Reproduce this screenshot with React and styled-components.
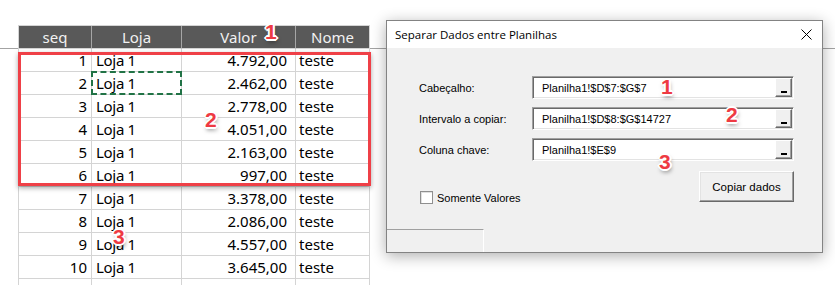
import React from "react";
import styled, { createGlobalStyle } from "styled-components";

const GlobalStyle = createGlobalStyle`
  html, body { margin: 0; padding: 0; background: #fff; }
  * { box-sizing: border-box; }
`;

const Page = styled.div`
  position: relative;
  width: 835px;
  height: 285px;
  overflow: hidden;
  display: flex;
  align-items: flex-start;
  background: linear-gradient(#a3a3a3, #a3a3a3) 0 48px / 100% 1px no-repeat, #fff;
`;

const SheetWrap = styled.div`
  position: relative;
  margin: 25px 0 0 18px;
`;

const Sheet = styled.div`
  display: grid;
  grid-template-columns: 73px 90px 114px 74px;
  border-top: 1px solid #d4d4d4;
  border-left: 1px solid #d4d4d4;
  background: #fff;
  font-family: "Noto Sans", "Liberation Sans", sans-serif;
  font-size: 15px;
  color: #000;
`;

const HeadCell = styled.div`
  height: 23px;
  background: #595959;
  color: #f2f2f2;
  border-right: 1px solid ${(p) => (p.$last ? "#d4d4d4" : "#a6a6a6")};
  border-bottom: 1px solid #d4d4d4;
  display: flex;
  align-items: center;
  justify-content: center;
  line-height: 1;
`;

const Cell = styled.div`
  position: relative;
  height: 23px;
  border-right: 1px solid #d4d4d4;
  border-bottom: 1px solid #d4d4d4;
  display: flex;
  align-items: center;
  justify-content: ${(p) => (p.$right ? "flex-end" : "flex-start")};
  padding: 0 ${(p) => p.$pr || 0}px 0 ${(p) => p.$pl || 0}px;
  white-space: nowrap;
  line-height: 1;
  letter-spacing: ${(p) => (p.$tight ? "-0.3px" : "0")};
  &::after {
    content: "";
    display: ${(p) => (p.$marked ? "block" : "none")};
    position: absolute;
    left: -1px;
    top: -1px;
    right: -1px;
    bottom: -1px;
    border: 2px dashed #217346;
  }
`;

const Highlight = styled.div`
  position: absolute;
  left: 0;
  top: 27px;
  width: 353px;
  height: 134px;
  border: 3px solid #ef4047;
  box-shadow: 0 2px 5px rgba(0, 0, 0, 0.35);
  pointer-events: none;
`;

const Dialog = styled.div`
  margin: 20px 0 0 16px;
  width: 437px;
  height: 233px;
  border: 1px solid #838383;
  box-shadow: 0 3px 14px rgba(0, 0, 0, 0.32);
  display: flex;
  flex-direction: column;
  font-family: "Liberation Sans", Arial, sans-serif;
  font-size: 11px;
  color: #000;
`;

const TitleBar = styled.div`
  height: 27px;
  background: #fff;
  display: flex;
  align-items: center;
  justify-content: space-between;
  padding: 0 10px 0 8px;
  font-family: "Open Sans", "Noto Sans", sans-serif;
  font-size: 11.5px;
  flex-shrink: 0;
`;

const Body = styled.div`
  flex: 1;
  background: #f0f0f0;
  display: flex;
  flex-direction: column;
`;

const Form = styled.div`
  display: grid;
  grid-template-columns: 113px 262px;
  row-gap: 8px;
  padding: 28px 0 0 32px;
`;

const Label = styled.div`
  display: flex;
  align-items: center;
`;

const RefBox = styled.div`
  height: 23px;
  background: #fff;
  border: 1px solid;
  border-color: #a0a0a0 #fff #fff #a0a0a0;
  box-shadow: inset 1px 1px #696969, inset -1px -1px #e3e3e3;
  display: flex;
  align-items: center;
  padding: 1px 1px 1px 9px;
`;

const RefText = styled.span`
  flex: 1;
`;

const PickButton = styled.div`
  width: 17px;
  align-self: stretch;
  background: #f0f0f0;
  border: 1px solid;
  border-color: #fff #696969 #696969 #fff;
  box-shadow: inset -1px -1px #a0a0a0;
  display: flex;
  align-items: flex-end;
  justify-content: center;
  padding-bottom: 3px;
`;

const Bar = styled.span`
  width: 6px;
  height: 2px;
  background: #000;
`;

const Actions = styled.div`
  display: flex;
  justify-content: space-between;
  padding: 10px 28px 0 33px;
`;

const CheckRow = styled.label`
  display: flex;
  align-items: center;
  gap: 4px;
  margin-top: 20px;
  height: 13px;
`;

const Box = styled.span`
  width: 13px;
  height: 13px;
  background: #fff;
  border: 1px solid #8f8f8f;
  box-shadow: inset 1px 1px #e0e0e0;
`;

const Button = styled.div`
  width: 95px;
  height: 31px;
  background: #f0f0f0;
  border: 1px solid;
  border-color: #fff #696969 #696969 #fff;
  box-shadow: inset -1px -1px #a0a0a0, inset 1px 1px #e3e3e3;
  display: flex;
  align-items: center;
  justify-content: center;
  font-size: 11.5px;
`;

const Status = styled.div`
  margin-top: auto;
  width: 97px;
  height: 23px;
  border-top: 1px solid #a0a0a0;
  border-right: 1px solid #fff;
`;

const Mark = styled.span`
  position: absolute;
  left: ${(p) => p.$x}px;
  top: ${(p) => p.$y}px;
  font-family: "Liberation Sans", Arial, sans-serif;
  font-weight: bold;
  font-size: 21px;
  line-height: 20px;
  color: #ee3a42;
  text-shadow: 1px 0 #fff, -1px 0 #fff, 0 1px #fff, 0 -1px #fff, 1px 1px #fff,
    -1px -1px #fff, 1px -1px #fff, -1px 1px #fff, 2px 0 #fff, -2px 0 #fff,
    0 2px #fff, 0 -2px #fff, 1px 3px 4px rgba(0, 0, 0, 0.5);
  pointer-events: none;
`;

const rows = [
  ["1", "4.792,00"],
  ["2", "2.462,00"],
  ["3", "2.778,00"],
  ["4", "4.051,00"],
  ["5", "2.163,00"],
  ["6", "997,00"],
  ["7", "3.378,00"],
  ["8", "2.086,00"],
  ["9", "4.557,00"],
  ["10", "3.645,00"],
];

const fields = [
  ["Cabeçalho:", "Planilha1!$D$7:$G$7"],
  ["Intervalo a copiar:", "Planilha1!$D$8:$G$14727"],
  ["Coluna chave:", "Planilha1!$E$9"],
];

export default function App() {
  return (
    <Page>
      <GlobalStyle />
      <SheetWrap>
        <Sheet>
          <HeadCell>seq</HeadCell>
          <HeadCell>Loja</HeadCell>
          <HeadCell>Valor</HeadCell>
          <HeadCell $last>Nome</HeadCell>
          {rows.map(([n, v], i) => (
            <React.Fragment key={n}>
              <Cell $right $pr={4}>{n}</Cell>
              <Cell $pl={4} $tight $marked={i === 1}>Loja 1</Cell>
              <Cell $right $pr={8}>{v}</Cell>
              <Cell $pl={3}>teste</Cell>
            </React.Fragment>
          ))}
          <Cell />
          <Cell />
          <Cell />
          <Cell />
        </Sheet>
        <Highlight />
      </SheetWrap>

      <Dialog>
        <TitleBar>
          <span>Separar Dados entre Planilhas</span>
          <svg width="11" height="11" viewBox="0 0 11 11">
            <path d="M0.5 0.5 L10.5 10.5 M10.5 0.5 L0.5 10.5" stroke="#000" strokeWidth="1" />
          </svg>
        </TitleBar>
        <Body>
          <Form>
            {fields.map(([l, v]) => (
              <React.Fragment key={l}>
                <Label>{l}</Label>
                <RefBox>
                  <RefText>{v}</RefText>
                  <PickButton>
                    <Bar />
                  </PickButton>
                </RefBox>
              </React.Fragment>
            ))}
          </Form>
          <Actions>
            <CheckRow>
              <Box />
              Somente Valores
            </CheckRow>
            <Button>Copiar dados</Button>
          </Actions>
          <Status />
        </Body>
      </Dialog>

      <Mark $x={265} $y={22}>1</Mark>
      <Mark $x={205} $y={110}>2</Mark>
      <Mark $x={113} $y={227}>3</Mark>
      <Mark $x={661} $y={77}>1</Mark>
      <Mark $x={726} $y={105}>2</Mark>
      <Mark $x={659} $y={152}>3</Mark>
    </Page>
  );
}
